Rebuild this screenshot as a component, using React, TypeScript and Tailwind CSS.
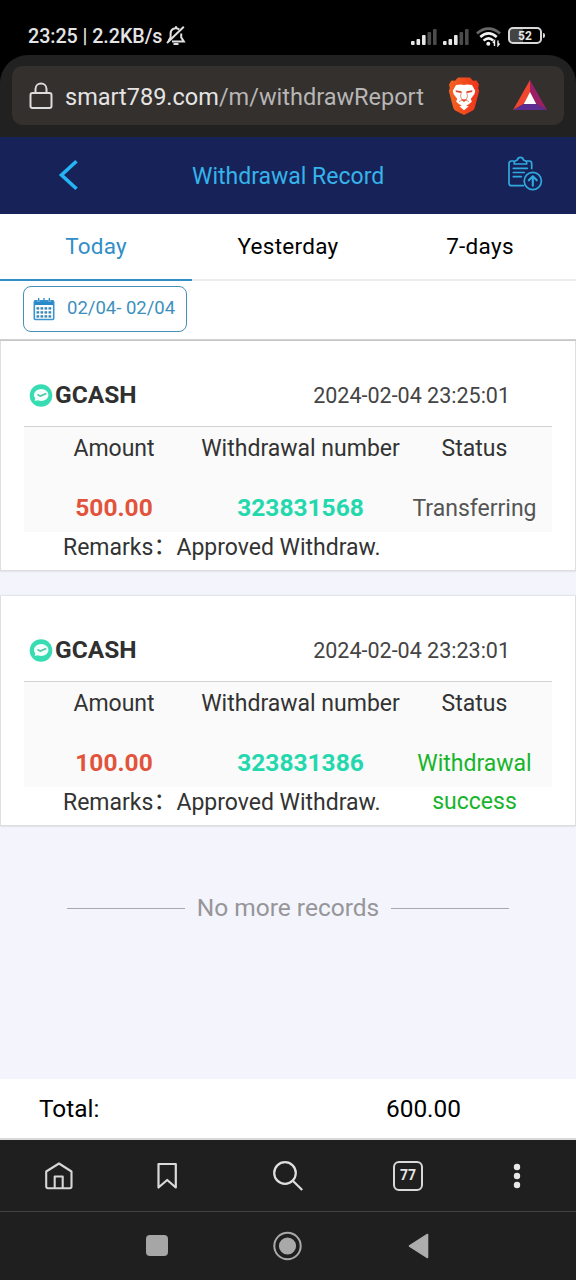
import React from "react";

type WithdrawalRecord = {
  time: string;
  amount: string;
  number: string;
  status: string;
  statusClass: string;
};

const records: WithdrawalRecord[] = [
  {
    time: "2024-02-04 23:25:01",
    amount: "500.00",
    number: "323831568",
    status: "Transferring",
    statusClass: "text-[#555]",
  },
  {
    time: "2024-02-04 23:23:01",
    amount: "100.00",
    number: "323831386",
    status: "Withdrawal success",
    statusClass: "text-[#18b42c]",
  },
];

function SignalIcon() {
  return (
    <svg width="26" height="18" viewBox="0 0 26 18">
      <rect x="0" y="13" width="3.6" height="4" rx="1" fill="#e8e8e8" />
      <rect x="5.5" y="11" width="3.6" height="6" rx="1" fill="#e8e8e8" />
      <rect x="11" y="7" width="3.6" height="10" rx="1" fill="#e8e8e8" />
      <rect x="16.5" y="4" width="3.6" height="13" rx="1" fill="#4b4b4b" />
      <rect x="22" y="1" width="3.6" height="16" rx="1" fill="#4b4b4b" />
    </svg>
  );
}

function BraveIcon() {
  return (
    <svg className="ml-[13px] shrink-0" width="32" height="38" viewBox="0 0 32 38">
      <defs>
        <linearGradient id="lion" x1="0" x2="1">
          <stop offset="0" stopColor="#f4641f" />
          <stop offset="1" stopColor="#f0321c" />
        </linearGradient>
      </defs>
      <path
        d="M10 .5h12l3 3.300 3.500-.3L31 7.500l-.8 3.500 1 3-4.400 16.500c-.4 1.500-1.300 2.500-2.500 3.300L16 38l-8.300-4.200c-1.200-.8-2.100-1.800-2.500-3.300L.8 14l1-3L1 7.500l2.500-4 3.500.3z"
        fill="url(#lion)"
      />
      <path
        d="M8 8 13 7.500l3 .6 3-.6 5 .5 3.300 6-1 3.200-3.500 4.600 1 3-3.700 3-1.500.1-2.600 2.300-2.600-2.300-1.500-.1-3.700-3 1-3-3.500-4.600L4.700 14z"
        fill="#fff"
      />
      <path d="M7.500 13.200l6 1-.6 1.800-5-1zM24.500 13.200l-6 1 .6 1.800 5-1z" fill="#d9472b" />
      <path d="M13.700 14.500 12.500 19l1 3.200L16 24l2.500-1.800 1-3.200-1.200-4.500M11 24.500l5-1.800 5 1.800" fill="none" stroke="#ea9480" strokeWidth="1" />
      <path d="m12.800 21.700 3.200 1.100 3.200-1.100L16 25z" fill="#e2431f" />
      <path d="m11.500 29.500 4.500-2.500 4.500 2.500-4.500 3.800z" fill="#fff" />
    </svg>
  );
}

function StatusBar() {
  return (
    <div className="flex h-[55px] shrink-0 items-center bg-black pt-[18px] pl-7 text-[#e4e4e4]">
      <span className="whitespace-nowrap text-[19.7px] font-medium tracking-[-0.05px]">23:25 | 2.2KB/s</span>
      <svg className="mb-[2px] ml-[4px]" width="20" height="21" viewBox="0 0 20 21" fill="none" stroke="#e0e0e0" strokeWidth="2">
        <path d="M13.200 4.300C8.500 1.400 4.600 4.800 4.600 8.500v3.800L2.500 16M15.200 8.400v4l2.600 4H6" />
        <path d="M17.800 1.700 1 18" />
        <path d="M7.500 19h5" strokeWidth="2" />
        <path d="M10 3.500V1.200" />
      </svg>
      <div className="ml-auto flex items-center pr-[31px]">
        <SignalIcon />
        <span className="w-[6px]" />
        <SignalIcon />
        <svg className="ml-[7px]" width="26" height="20" viewBox="0 0 26 20" fill="none" strokeWidth="2.600">
          <path d="M1 6.500C8 0 17 0 24 6.500" stroke="#686868" />
          <path d="M4.300 10C9.500 5.300 15.500 5.300 20.700 10" stroke="#f2f2f2" />
          <path d="M7.600 13.600c3-2.700 6.800-2.700 9.800 0" stroke="#f2f2f2" />
          <circle cx="12.300" cy="16.700" r="2" fill="#f2f2f2" />
          <path d="M18.500 19v-5l-1.500 2M22 13.500v5l1.500-2" stroke="#f2f2f2" strokeWidth="1.400" />
        </svg>
        <div className="mb-[2px] ml-[6px] flex h-[17px] w-[34px] items-center justify-center rounded-[5px] border-2 border-[#d8d8d8] bg-linear-to-r from-[#444] from-45% to-black to-45% text-[12px] font-bold leading-none">
          52
        </div>
        <span className="mb-[2px] ml-px h-[5px] w-[2px] rounded-r bg-[#d8d8d8]" />
      </div>
    </div>
  );
}

function AddressBar() {
  return (
    <div className="h-[82px] shrink-0 bg-black">
      <div className="h-full rounded-t-[28px] bg-[#212121] px-3 pt-[11px]">
        <div className="flex h-[59px] items-center rounded-[10px] bg-[#33302e] pl-[17px]">
          <svg width="24" height="28" viewBox="0 0 24 28" fill="none" stroke="#dcdcdc" strokeWidth="2">
            <rect x="1.500" y="11" width="21" height="15" rx="2" />
            <path d="M6.500 11V7c0-7.300 11-7.300 11 0v4" />
          </svg>
          <span className="mt-[5px] ml-[12px] w-[370px] whitespace-nowrap text-[23.500px] text-[#b8b6b5]">
            <span className="text-[#e6e4e3]">smart789.com</span>/m/withdrawReport
          </span>
          <BraveIcon />
          <svg className="ml-[33px] shrink-0" width="34" height="31" viewBox="0 0 34 31">
            <path d="M17 0 0 30l11.500-6.500L17 13z" fill="#f0462f" />
            <path d="M17 0v13l5.500 10.500L34 30z" fill="#9b1f66" />
            <path d="M0 30 11.500 23.500h11L34 30z" fill="#5e2d91" />
            <path d="m17 12 6.200 12H10.800z" fill="#fff" />
          </svg>
        </div>
      </div>
    </div>
  );
}

function PageHeader() {
  return (
    <div className="grid h-[77px] shrink-0 grid-cols-3 items-center bg-[#172358] text-[#35b3ea]">
      <svg className="mb-[2px] ml-[57px]" width="22" height="32" viewBox="0 0 22 32" fill="none" stroke="#25b4f4" strokeWidth="3.600">
        <path d="M19.500 2.200 4.500 16l15 13.800" />
      </svg>
      <span className="pt-[3px] text-center text-[23px] whitespace-nowrap">Withdrawal Record</span>
      <svg className="mr-[33px] mb-[5px] justify-self-end" width="36" height="35" viewBox="0 0 36 35" fill="none" stroke="#30a9df" strokeWidth="1.700" strokeLinecap="round" strokeLinejoin="round">
        <path d="M6.500 5H4.500C3 5 2 6 2 7.500v19.700C2 28.700 3 29.700 4.500 29.700h11.800M20 5h2.200c1.500 0 2.500 1 2.500 2.500v5" />
        <path d="M7.200 8V5.500L10.300 4c.8-3.400 5.400-3.400 6.200 0l3.100 1.500V8z" />
        <path d="M6.300 12.300h14M6.300 16.500h11M6.300 20.700h8" />
        <circle cx="25.800" cy="25" r="8.600" />
        <path d="M25.800 29.800v-9M21.800 24.300l4-4 4 4" strokeWidth="2.100" />
      </svg>
    </div>
  );
}

function Tabs() {
  return (
    <div className="grid h-[67px] shrink-0 grid-cols-3 border-b-2 border-[#ececec] bg-white text-center text-[22.500px] leading-[65px] text-black">
      <div className="-mb-[2px] border-b-[3px] border-[#318ec7] tracking-[0.2px] text-[#318ec7]">Today</div>
      <div className="tracking-[0.3px]">Yesterday</div>
      <div className="tracking-[0.3px]">7-days</div>
    </div>
  );
}

function DateFilter() {
  return (
    <div className="h-[60px] shrink-0 border-b-2 border-[#d4d4d4] bg-white pt-[5px] pl-[23px]">
      <button className="flex h-[46px] w-[164px] items-center rounded-[8px] border border-[#4590b8] pl-[9px] text-[#3d8fbe]">
        <svg width="22" height="24" viewBox="0 0 22 24">
          <path d="M1.500 3H4v2h3V3h8v2h3V3h2.500v5h-19zM5 1h1.300v3H5zM10.300 1h1.300v3h-1.300zM15.700 1H17v3h-1.300z" fill="#2789c8" />
          <rect x="1.300" y="4" width="19.400" height="18.500" rx="1" fill="none" stroke="#3b93cb" strokeWidth="1.600" />
          <g fill="#3b87b5">
            {[10.2, 14.2, 18.2].map((y) =>
              [3.5, 7.5, 11.5, 15.5].map((x) => <rect key={`${x}-${y}`} x={x} y={y} width="2.700" height="2.400" />),
            )}
          </g>
        </svg>
        <span className="ml-[12px] whitespace-nowrap text-[18.500px]">02/04- 02/04</span>
      </button>
    </div>
  );
}

function GcashIcon() {
  return (
    <svg width="24" height="24" viewBox="0 0 24 24">
      <circle cx="12" cy="12.500" r="11.300" fill="#38dcb2" />
      <ellipse cx="12.200" cy="12" rx="7.300" ry="6" fill="#f4fffc" />
      <path d="m6.500 14.500-.8 3.500 4-1z" fill="#f4fffc" />
      <path d="m8.500 11.500 2.800 1.600 6-2.500" fill="none" stroke="#4cc5a7" strokeWidth="1.600" />
    </svg>
  );
}

function RecordCard({ record }: { record: WithdrawalRecord }) {
  return (
    <section className="h-[230px] shrink-0 border border-t-0 border-[#dedede] bg-white px-[23px] text-[#333] shadow-[0_0_2px_rgba(0,0,0,0.2)]">
      <div className="flex h-[86px] items-center border-b border-[#d2d2d2] pt-[22px] pr-[42px] pl-[5px]">
        <GcashIcon />
        <span className="ml-[2px] pt-[2px] text-[24.500px] font-bold text-[#303030]">GCASH</span>
        <time className="ml-auto pt-[3px] whitespace-nowrap text-[21.500px] text-[#444]">{record.time}</time>
      </div>
      <div className="grid h-[105px] grid-cols-[180px_193px_155px] grid-rows-[42px_105px] justify-items-center bg-[#fafafa] text-[23px] leading-[42px] whitespace-nowrap">
        <span className="pt-px">Amount</span>
        <div className="flex w-full justify-center pt-px">
          <span>Withdrawal number</span>
        </div>
        <span className="pt-px">Status</span>
        <span className="pt-[20px] text-[24.500px] leading-[38px] font-bold text-[#e2533c]">{record.amount}</span>
        <span className="pt-[20px] text-[24.500px] leading-[38px] font-bold text-[#24d8ae]">{record.number}</span>
        <span className={`w-[130px] pt-[21px] text-center leading-[38px] whitespace-normal ${record.statusClass}`}>
          {record.status}
        </span>
      </div>
      <div className="flex h-[33px] items-center pl-[39px] text-[23px] whitespace-nowrap">
        <span>Remarks</span>
        <span className="mb-[8px] w-[23px] font-['Noto_Sans_CJK_SC',sans-serif] leading-none">：</span>
        <span>Approved Withdraw.</span>
      </div>
    </section>
  );
}

function BrowserToolbar() {
  return (
    <nav className="flex h-[71px] shrink-0 items-center bg-[#1f1f1f]">
      <svg className="ml-[44px]" width="30" height="30" viewBox="0 0 30 30" fill="none" stroke="#d6d6d6" strokeWidth="2.100" strokeLinejoin="round">
        <path d="M2.200 10.500 15 2.500l12.500 8v15c0 1-.7 1.700-1.700 1.700H3.900c-1 0-1.700-.7-1.700-1.700z" />
        <path d="M10.700 27V15.500h8V27" />
      </svg>
      <svg className="ml-[82px]" width="22" height="30" viewBox="0 0 22 30" fill="none" stroke="#dadada" strokeWidth="2.200" strokeLinejoin="round">
        <path d="M2.500 3h17.300v23.500l-8.600-7.500-8.700 7.500z" />
      </svg>
      <svg className="ml-[94px]" width="32" height="32" viewBox="0 0 32 32" fill="none" stroke="#dedede" strokeWidth="2.200">
        <circle cx="13" cy="13" r="10.800" />
        <path d="m20.800 20.800 9.400 9.200" />
      </svg>
      <div className="ml-[89px] flex h-[30px] w-[30px] items-center justify-center rounded-[6px] border-2 border-[#d8d8d8] text-[14px] font-bold text-[#e4e4e4]">
        77
      </div>
      <svg className="ml-[90px]" width="8" height="26" viewBox="0 0 8 26" fill="#e8e8e8">
        <circle cx="4" cy="4" r="3.200" />
        <circle cx="4" cy="13" r="3.200" />
        <circle cx="4" cy="22" r="3.200" />
      </svg>
    </nav>
  );
}

function SystemNav() {
  return (
    <div className="flex h-[69px] shrink-0 items-center border-t border-[#424242] bg-[#1f1f1f] pb-px">
      <span className="ml-[146px] h-[21px] w-[22px] rounded-[4px] bg-[#a6a6a6]" />
      <svg className="ml-[104px]" width="30" height="30" viewBox="0 0 30 30">
        <circle cx="15.500" cy="15" r="13.200" fill="none" stroke="#a9a9a9" strokeWidth="2" />
        <circle cx="15.500" cy="15" r="8.600" fill="#a9a9a9" />
      </svg>
      <svg className="ml-[106px]" width="22" height="26" viewBox="0 0 22 26">
        <path d="M19.500 1.500v23L1.500 13z" fill="#adadad" stroke="#adadad" strokeWidth="1.600" strokeLinejoin="round" />
      </svg>
    </div>
  );
}

export default function App() {
  return (
    <main className="flex h-[1280px] w-[576px] flex-col overflow-hidden bg-[#f4f4fc] font-[Roboto,sans-serif]">
      <StatusBar />
      <AddressBar />
      <PageHeader />
      <Tabs />
      <DateFilter />
      <div className="flex flex-col gap-[25px]">
        {records.map((record) => (
          <RecordCard key={record.number} record={record} />
        ))}
      </div>
      <div className="mt-[67px] flex items-center justify-center gap-[12px] text-[24.500px] leading-[30px] text-[#969699]">
        <span className="h-px w-[118px] bg-[#a8a8ac]" />
        <span className="whitespace-nowrap">No more records</span>
        <span className="h-px w-[118px] bg-[#a8a8ac]" />
      </div>
      <div className="mt-auto flex h-[61px] shrink-0 items-center border-b-2 border-[#d8d8d8] bg-white pt-[2px] text-[24.400px] text-black">
        <span className="ml-[39px] w-[347px]">Total:</span>
        <span>600.00</span>
      </div>
      <BrowserToolbar />
      <SystemNav />
    </main>
  );
}
